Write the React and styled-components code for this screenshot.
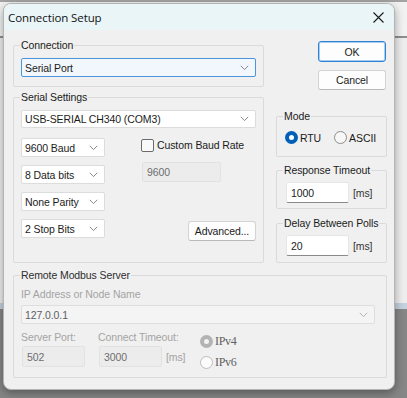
import React from 'react';
import styled, { createGlobalStyle } from 'styled-components';

const GlobalStyle = createGlobalStyle`
  html, body { margin: 0; padding: 0; }
  body {
    width: 407px;
    height: 398px;
    overflow: hidden;
    font-family: "Liberation Sans", Arial, sans-serif;
    font-size: 10.5px;
    letter-spacing: -0.1px;
    color: #1b1b1b;
  }
  * { box-sizing: border-box; }
`;

const Desktop = styled.div`
  position: relative;
  width: 407px;
  height: 398px;
  display: flex;
  flex-direction: column;
  background: #868686;
`;

const BackWindow = styled.div`
  height: 309px;
  display: flex;
  flex-direction: column;
  background: #f2f2f2;
  border-top: 2px solid #a3a3a3;
`;

const BackToolbar = styled.div`
  height: 36px;
  border-bottom: 2px solid #8e8e8e;
`;

const BackFill = styled.div`
  flex: 1;
  background: #eeeeee;
`;

const BackStrip = styled.div`
  height: 6px;
  background: #c4d1de;
`;

const Dialog = styled.div`
  position: absolute;
  left: 3px;
  top: 3px;
  width: 392px;
  height: 387px;
  display: flex;
  flex-direction: column;
  background: #f0f0f0;
  border: 1px solid #b4b4b4;
  border-radius: 8px;
  overflow: hidden;
  box-shadow: 0 3px 10px rgba(0, 0, 0, 0.35);
`;

const TitleBar = styled.div`
  height: 26px;
  display: flex;
  align-items: center;
  justify-content: space-between;
  padding: 0 10px 0 4px;
  background: #eaf5f7;
`;

const Title = styled.span`
  font-family: "Open Sans", "Noto Sans", sans-serif;
  font-size: 11.5px;
  letter-spacing: -0.1px;
  color: #111;
`;

const Body = styled.div`
  flex: 1;
  padding: 11px 7px 0 9px;
`;

const TopGrid = styled.div`
  display: grid;
  grid-template-columns: 251px 111px;
  column-gap: 12px;
`;

const Column = styled.div`
  display: flex;
  flex-direction: column;
`;

const Group = styled.div`
  position: relative;
  height: ${(p) => p.$h}px;
  margin-top: ${(p) => p.$mt || 0}px;
  padding: ${(p) => p.$pad || '12px 7px 0 7px'};
  border: 1px solid #dadada;
  border-radius: 2px;
`;

const GroupLabel = styled.span`
  position: absolute;
  top: -8px;
  left: 6px;
  padding: 0 1px;
  line-height: 14px;
  background: #f0f0f0;
  color: ${(p) => (p.$dim ? '#2e2e2e' : '#1b1b1b')};
`;

const Combo = styled.div`
  display: flex;
  align-items: center;
  justify-content: space-between;
  width: ${(p) => (p.$w ? `${p.$w}px` : '100%')};
  height: ${(p) => p.$h || 19}px;
  margin-top: ${(p) => p.$mt || 0}px;
  padding: 0 6px 0 3px;
  background: ${(p) => (p.$focus ? '#f1f7fd' : p.$disabled ? '#f4f4f4' : '#ffffff')};
  border: 1px solid ${(p) => (p.$focus ? '#4b95dc' : p.$disabled ? '#dedede' : '#dcdcdc')};
  border-radius: 2px;
  color: ${(p) => (p.$disabled ? '#5e5e5e' : '#1b1b1b')};
`;

const Chevron = ({ light }) => (
  <svg width="9" height="6" viewBox="0 0 9 6">
    <polyline
      points="0.8,0.8 4.5,4.6 8.2,0.8"
      fill="none"
      stroke={light ? '#b5b5b5' : '#8a8a8a'}
      strokeWidth="1"
    />
  </svg>
);

const SelectBox = ({ children, ...rest }) => (
  <Combo {...rest}>
    <span>{children}</span>
    <Chevron light={rest.$disabled} />
  </Combo>
);

const SettingsGrid = styled.div`
  display: grid;
  grid-template-columns: 84px 1fr;
  column-gap: 36px;
  margin-top: 10px;
`;

const Stack = styled.div`
  display: flex;
  flex-direction: column;
  gap: 8px;
`;

const CheckRow = styled.label`
  display: flex;
  align-items: center;
  height: 14px;
  gap: 3px;
`;

const CheckBox = styled.span`
  width: 13px;
  height: 13px;
  border: 1px solid #6b6b6b;
  border-radius: 2px;
  background: #f9f9f9;
`;

const Field = styled.div`
  display: flex;
  align-items: center;
  width: ${(p) => p.$w}px;
  height: ${(p) => p.$h || 21}px;
  margin: ${(p) => p.$m || 0};
  padding-left: 4px;
  background: ${(p) => (p.$disabled ? '#ececec' : '#ffffff')};
  border: 1px solid ${(p) => (p.$disabled ? '#e2e2e2' : '#e6e6e6')};
  border-bottom-color: ${(p) => (p.$disabled ? '#e2e2e2' : '#8a8a8a')};
  border-radius: 2px;
  color: ${(p) => (p.$disabled ? '#6e6e6e' : '#1b1b1b')};
`;

const Button = styled.div`
  display: flex;
  align-items: center;
  justify-content: center;
  align-self: flex-end;
  width: 68px;
  height: ${(p) => p.$h || 20}px;
  margin: ${(p) => p.$m || 0};
  background: #fdfdfd;
  border: 1px solid ${(p) => (p.$default ? '#2f82d3' : '#d3d3d3')};
  border-bottom-color: ${(p) => (p.$default ? '#2f82d3' : '#b9b9b9')};
  border-radius: 3px;
  box-shadow: ${(p) => (p.$default ? 'inset 0 0 0 1px #a8cdf0' : 'none')};
  color: #1b1b1b;
`;

const RadioRow = styled.div`
  display: flex;
  align-items: center;
  gap: 13px;
`;

const RadioOption = styled.label`
  display: flex;
  align-items: center;
  gap: 2px;
  font-family: ${(p) => (p.$serif ? '"Liberation Serif", "Times New Roman", serif' : 'inherit')};
  font-size: ${(p) => (p.$serif ? '12px' : 'inherit')};
  letter-spacing: ${(p) => (p.$serif ? '-0.3px' : 'inherit')};
  color: ${(p) => (p.$disabled ? '#5f5f5f' : '#1b1b1b')};
`;

const Radio = styled.span`
  position: relative;
  width: 13px;
  height: 13px;
  border-radius: 50%;
  background: ${(p) =>
    p.$checked ? (p.$disabled ? '#b3b3b3' : '#005fb8') : p.$disabled ? '#fbfbfb' : '#f7f7f7'};
  border: 1px solid
    ${(p) => (p.$checked ? 'transparent' : p.$disabled ? '#bdbdbd' : '#8c8c8c')};

  &::after {
    content: '';
    display: ${(p) => (p.$checked ? 'block' : 'none')};
    position: absolute;
    left: 3px;
    top: 3px;
    width: 5px;
    height: 5px;
    border-radius: 50%;
    background: ${(p) => (p.$disabled ? '#f3f3f3' : '#ffffff')};
  }
`;

const FieldRow = styled.div`
  display: flex;
  align-items: center;
  gap: 4px;
`;

const Unit = styled.span`
  color: ${(p) => (p.$disabled ? '#a2a2a2' : '#333')};
`;

const DimText = styled.div`
  line-height: 14px;
  color: #a4a4a4;
`;

const RemoteRow = styled.div`
  display: flex;
  margin-top: 6px;
`;

const RemoteCol = styled.div`
  display: flex;
  flex-direction: column;
  width: ${(p) => p.$w}px;
  gap: 2px;
`;

const RadioStack = styled.div`
  display: flex;
  flex-direction: column;
  gap: 6px;
  margin-top: 4px;
`;

function CloseIcon() {
  return (
    <svg width="11" height="11" viewBox="0 0 11 11">
      <path d="M0.5 0.5 L10.5 10.5 M10.5 0.5 L0.5 10.5" stroke="#1a1a1a" strokeWidth="1.1" />
    </svg>
  );
}

export default function App() {
  return (
    <Desktop>
      <GlobalStyle />
      <BackWindow>
        <BackToolbar />
        <BackFill />
        <BackStrip />
      </BackWindow>

      <Dialog>
        <TitleBar>
          <Title>Connection Setup</Title>
          <CloseIcon />
        </TitleBar>

        <Body>
          <TopGrid>
            <Column>
              <Group $h={42} $mt={4}>
                <GroupLabel>Connection</GroupLabel>
                <SelectBox $focus>Serial Port</SelectBox>
              </Group>

              <Group $h={166} $mt={10}>
                <GroupLabel>Serial Settings</GroupLabel>
                <SelectBox $h={18}>USB-SERIAL CH340 (COM3)</SelectBox>
                <SettingsGrid>
                  <Stack>
                    <SelectBox>9600 Baud</SelectBox>
                    <SelectBox>8 Data bits</SelectBox>
                    <SelectBox>None Parity</SelectBox>
                    <SelectBox>2 Stop Bits</SelectBox>
                  </Stack>
                  <Column>
                    <CheckRow>
                      <CheckBox />
                      Custom Baud Rate
                    </CheckRow>
                    <Field $w={79} $h={20} $m="10px 0 0 1px" $disabled>
                      9600
                    </Field>
                    <Button $m="39px 0 0 0">Advanced...</Button>
                  </Column>
                </SettingsGrid>
              </Group>
            </Column>

            <Column>
              <Button $default $h={21} $m="0 1px 0 0">OK</Button>
              <Button $m="8px 1px 0 0">Cancel</Button>

              <Group $h={41} $mt={26} $pad="14px 8px 0 8px">
                <GroupLabel>Mode</GroupLabel>
                <RadioRow>
                  <RadioOption>
                    <Radio $checked />
                    RTU
                  </RadioOption>
                  <RadioOption>
                    <Radio />
                    ASCII
                  </RadioOption>
                </RadioRow>
              </Group>

              <Group $h={39} $mt={13} $pad="11px 8px 0 9px">
                <GroupLabel>Response Timeout</GroupLabel>
                <FieldRow>
                  <Field $w={63}>1000</Field>
                  <Unit>[ms]</Unit>
                </FieldRow>
              </Group>

              <Group $h={40} $mt={14} $pad="11px 8px 0 9px">
                <GroupLabel>Delay Between Polls</GroupLabel>
                <FieldRow>
                  <Field $w={63}>20</Field>
                  <Unit>[ms]</Unit>
                </FieldRow>
              </Group>
            </Column>
          </TopGrid>

          <Group $h={103} $mt={12} $pad="11px 11px 0 7px">
            <GroupLabel $dim>Remote Modbus Server</GroupLabel>
            <DimText>IP Address or Node Name</DimText>
            <SelectBox $disabled $mt={4}>127.0.0.1</SelectBox>
            <RemoteRow>
              <RemoteCol $w={77}>
                <DimText>Server Port:</DimText>
                <Field $w={63} $m="0 0 0 1px" $disabled>502</Field>
              </RemoteCol>
              <RemoteCol $w={102}>
                <DimText>Connect Timeout:</DimText>
                <FieldRow>
                  <Field $w={63} $m="0 0 0 1px" $disabled>3000</Field>
                  <Unit $disabled>[ms]</Unit>
                </FieldRow>
              </RemoteCol>
              <RadioStack>
                <RadioOption $serif $disabled>
                  <Radio $checked $disabled />
                  IPv4
                </RadioOption>
                <RadioOption $serif $disabled>
                  <Radio $disabled />
                  IPv6
                </RadioOption>
              </RadioStack>
            </RemoteRow>
          </Group>
        </Body>
      </Dialog>
    </Desktop>
  );
}
